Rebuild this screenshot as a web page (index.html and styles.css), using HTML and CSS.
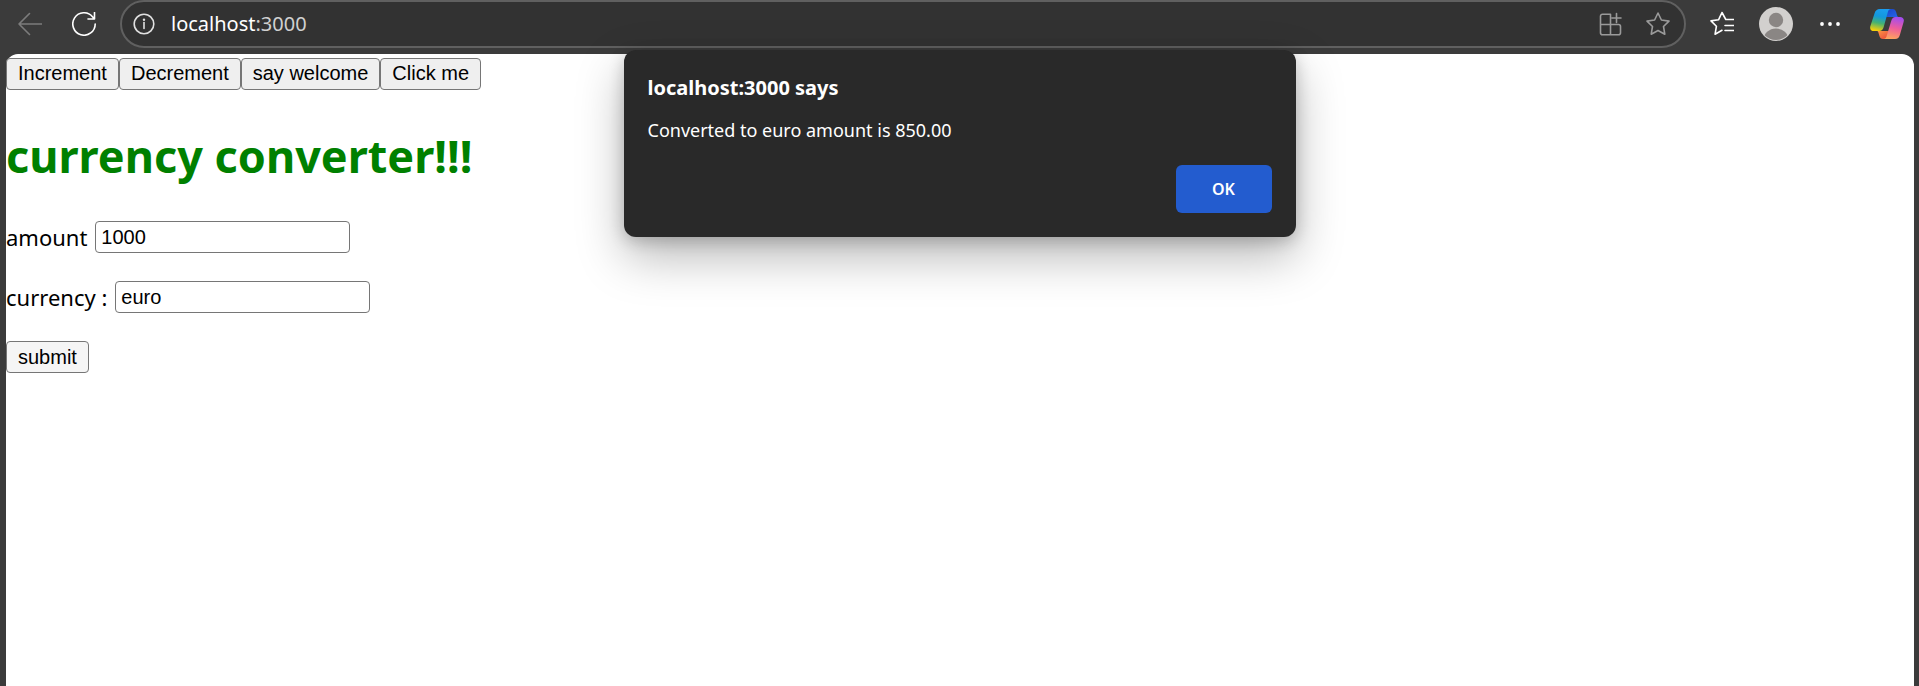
FILE: index.html
```html
<!DOCTYPE html>
<html lang="en">
<head>
<meta charset="utf-8">
<title>currency converter</title>
<link rel="stylesheet" href="styles.css">
</head>
<body>
<header class="toolbar">
  <button class="tool back" aria-label="Back">
    <svg width="24" height="24" viewBox="0 0 24 24"><path d="M24 12H1M11.500 1.500 1 12l10.500 10.500"/></svg>
  </button>
  <button class="tool reload" aria-label="Reload">
    <svg width="24" height="24" viewBox="0 0 24 24"><path d="M23.200 12A11.200 11.200 0 1 1 20.500 4.700l1.700 2M22.500.5v6.500h-6.500"/></svg>
  </button>
  <div class="omnibox">
    <button class="tool info" aria-label="Site information">
      <svg width="22" height="22" viewBox="0 0 22 22"><circle cx="11" cy="11" r="9.800"/><path d="M11 9.500v6"/><circle class="solid" cx="11" cy="6.800" r="1.200"/></svg>
    </button>
    <span class="address">localhost<span class="port">:3000</span></span>
    <button class="tool dim" aria-label="Apps">
      <svg width="24" height="24" viewBox="0 0 24 24"><path d="M11.500 12.500H1.500V4.200a2 2 0 0 1 2-2h8zM1.500 12.500h18a2 2 0 0 1 2 2v6.300a2 2 0 0 1-2 2h-16a2 2 0 0 1-2-2zM11.500 12.500v10.300M17.500 1.500v9M13 6h9"/></svg>
    </button>
    <button class="tool dim" aria-label="Add to favorites">
      <svg width="26" height="26" viewBox="0 0 26 26"><path d="M13 2l3.400 7 7.600 1.100-5.500 5.400 1.300 7.700L13 19.500l-6.800 3.700 1.300-7.700L2 10.100 9.600 9z"/></svg>
    </button>
  </div>
  <button class="tool" aria-label="Favorites">
    <svg width="24" height="26" viewBox="0 0 24 26"><path d="M23.500 8.500h-7.700L12 1.500 8.500 8.800 1 9.900l5.400 5.400L5.100 23.200 12 19.300M15 14.500h8.500M15 19.500h8.500"/></svg>
  </button>
  <button class="tool profile" aria-label="Profile">
    <svg class="avatar" width="34" height="34" viewBox="0 0 34 34">
      <clipPath id="face"><circle cx="17" cy="17" r="16"/></clipPath>
      <circle cx="17" cy="17" r="17" fill="#d2d0ce"/>
      <g fill="#8a8684"><circle cx="17" cy="13" r="7.200"/><ellipse cx="17" cy="33" rx="12.500" ry="11.500" clip-path="url(#face)"/></g>
    </svg>
  </button>
  <button class="tool more" aria-label="Settings and more">
    <svg width="20" height="6" viewBox="0 0 20 6"><circle class="solid" cx="2" cy="3" r="1.900"/><circle class="solid" cx="10" cy="3" r="1.900"/><circle class="solid" cx="18" cy="3" r="1.900"/></svg>
  </button>
  <button class="tool copilot" aria-label="Copilot">
    <svg width="34" height="32" viewBox="0 0 34 32">
      <defs>
        <linearGradient id="cool" x1="0.600" y1="0" x2="0.400" y2="1"><stop offset="0" stop-color="#1b9df0"/><stop offset=".35" stop-color="#1398dc"/><stop offset=".65" stop-color="#45b272"/><stop offset="1" stop-color="#f5cf0a"/></linearGradient>
        <linearGradient id="warm" x1="0.600" y1="0" x2="0.400" y2="1"><stop offset="0" stop-color="#a34cf0"/><stop offset=".5" stop-color="#ef5d9c"/><stop offset="1" stop-color="#ffa45c"/></linearGradient>
        <linearGradient id="blue" x1="0" y1="0" x2="1" y2="1"><stop offset="0" stop-color="#1b45c4"/><stop offset="1" stop-color="#2467ec"/></linearGradient>
        <linearGradient id="red" x1="0" y1="0" x2="1" y2="1"><stop offset="0" stop-color="#ff9a45"/><stop offset="1" stop-color="#e9443c"/></linearGradient>
      </defs>
      <path fill="url(#blue)" d="M17 1h5.500c2 0 3 1 3.600 3l1 3.500c.4 1.200 1 1.500 2 1.500H16z"/>
      <path fill="url(#red)" d="M7 23h12l-2.500 8H13c-2 0-3-1-3.600-3l-1-3.500C8 23.300 7.500 23 6.500 23z"/>
      <path fill="url(#cool)" d="M10 1h11c-1.600 0-2.500 1-3 2.500l-4.300 15.500c-.8 2.700-2 4-4.500 4H4c-3 0-4.500-2-3.600-5L4.500 5.500C5.300 2.500 7 1 10 1z"/>
      <path fill="url(#warm)" d="M25.500 9h4.500c3 0 4.500 2 3.600 5L30 26.500c-.8 3-2.200 4.500-5 4.500H13.500c1.600 0 2.500-1 3-2.500L21.200 13c.8-2.700 2-4 4.300-4z"/>
    </svg>
  </button>
</header>
<main class="page">
  <div class="actions"><button class="btn">Increment</button><button class="btn">Decrement</button><button class="btn">say welcome</button><button class="btn">Click me</button></div>
  <h1 class="title">currency converter!!!</h1>
  <form class="form">
    <div class="field"><label for="amount">amount</label><input id="amount" type="text" value="1000"></div>
    <div class="field"><label for="currency">currency :</label><input id="currency" type="text" value="euro"></div>
    <div class="field"><button class="btn submit" type="button">submit</button></div>
  </form>
</main>
<section class="dialog" role="alertdialog" aria-labelledby="dialog-title" aria-describedby="dialog-text">
  <h2 class="dialog-title" id="dialog-title">localhost:3000 says</h2>
  <p class="dialog-text" id="dialog-text">Converted to euro amount is 850.00</p>
  <button class="ok">OK</button>
</section>
</body>
</html>
```
FILE: styles.css
```css
* { box-sizing: border-box; }

body {
  margin: 0;
  min-height: 100vh;
  display: flex;
  flex-direction: column;
  background: #3b3b3b;
  font-family: "Noto Sans", "Open Sans", sans-serif;
}

.toolbar {
  display: flex;
  align-items: center;
  height: 48px;
  margin-bottom: 6px;
  padding: 0 15px 0 18px;
}

.tool {
  display: flex;
  padding: 0;
  border: 0;
  background: none;
  color: #fff;
}

.tool svg {
  fill: none;
  stroke: currentColor;
  stroke-width: 1.6;
  stroke-linecap: round;
  stroke-linejoin: round;
}

.tool .solid { fill: currentColor; stroke: none; }
.tool .avatar, .copilot svg { stroke: none; }

.back { margin-right: 30px; color: #7c7c7c; }
.reload { margin-right: 24px; }
.dim { color: #9a9a9a; }
.info { color: #e0e0e0; }
.profile { margin-left: 25px; }
.more { margin: 0 30px 0 27px; }

.omnibox {
  flex: 1;
  display: flex;
  align-items: center;
  gap: 22px;
  height: 48px;
  margin-right: 24px;
  padding: 0 13px 0 11px;
  border: 2px solid #606060;
  border-radius: 24px;
  background: #323232;
}

.omnibox .info { margin-right: -6px; }

.address {
  flex: 1;
  color: #fff;
  font: 20px/28px "Noto Sans", sans-serif;
}

.port { color: #d0d0d0; }

.page {
  flex: 1;
  margin: 0 5px 0 6px;
  padding-top: 4px;
  border-radius: 12px 12px 0 0;
  background: #fff;
  color: #000;
  font-size: 22px;
}

.actions { display: flex; }

.btn, .field input {
  height: 32px;
  border: 1px solid #767676;
  border-radius: 4px;
  color: #000;
  font: 20px "Liberation Sans", Arial, sans-serif;
}

.btn { padding: 0 11px 2px; background: #efefef; }
.submit { padding-bottom: 0; background: #f5f5f5; }

.title {
  margin: 34px 0 33px;
  color: #008000;
  font: bold 45px/64px "Noto Sans", sans-serif;
}

.form { display: grid; gap: 28px; }

.field {
  display: flex;
  align-items: center;
  gap: 8px;
  height: 32px;
}

.field input {
  width: 255px;
  padding: 0 5px;
  background: #fff;
}

.dialog {
  position: absolute;
  top: 50px;
  left: 50%;
  width: 672px;
  margin-left: -336px;
  padding: 24px;
  display: flex;
  flex-direction: column;
  border-radius: 12px;
  background: #292929;
  color: #fff;
  box-shadow: 0 20px 48px rgba(0, 0, 0, .28), 0 4px 16px rgba(0, 0, 0, .2);
}

.dialog-title { margin: 0 0 14px; font: bold 20px/28px "Noto Sans", sans-serif; }
.dialog-text { margin: 0 0 21px; font: 18px/28px "Noto Sans", sans-serif; }

.ok {
  align-self: flex-end;
  width: 96px;
  height: 48px;
  padding-bottom: 2px;
  border: 0;
  border-radius: 6px;
  background: #235ccf;
  color: #fff;
  font: 600 16px "Noto Sans", sans-serif;
}
```
